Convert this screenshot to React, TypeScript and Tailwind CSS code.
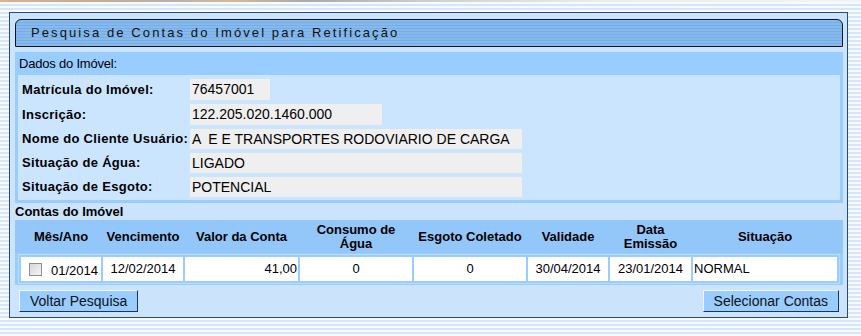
import React from 'react'

const font = "font-['Liberation_Sans',Arial,sans-serif]"

const fields = [
  { label: 'Matrícula do Imóvel:', value: '76457001', box: 'w-[80px] h-[21px]' },
  { label: 'Inscrição:', value: '122.205.020.1460.000', box: 'w-[192px] h-[21px]' },
  { label: 'Nome do Cliente Usuário:', value: 'A  E E TRANSPORTES RODOVIARIO DE CARGA', box: 'w-[332px] h-[20px]' },
  { label: 'Situação de Água:', value: 'LIGADO', box: 'w-[332px] h-[20px]' },
  { label: 'Situação de Esgoto:', value: 'POTENCIAL', box: 'w-[332px] h-[20px]' },
]

const cols = [
  { head: 'Mês/Ano', w: 'w-[80px]' },
  { head: 'Vencimento', w: 'w-[80px]' },
  { head: 'Valor da Conta', w: 'w-[113px]' },
  { head: 'Consumo de Água', w: 'w-[112px]', two: ['Consumo de', 'Água'] },
  { head: 'Esgoto Coletado', w: 'w-[112px]' },
  { head: 'Validade', w: 'w-[80px]' },
  { head: 'Data Emissão', w: 'w-[81px]', two: ['Data', 'Emissão'] },
  { head: 'Situação', w: 'flex-1' },
]

function Button({ children }: { children: React.ReactNode }) {
  return (
    <button className="h-[22px] border border-[#1d3557] border-t-[#eef6ff] border-l-[#eef6ff] bg-[#99ccff] px-[10px] text-[14px] leading-[18px] text-[#111]">
      {children}
    </button>
  )
}

export default function App() {
  return (
    <div
      className={`${font} h-[336px] w-[861px] overflow-hidden bg-[repeating-linear-gradient(to_bottom,#d4e6f7_0px,#d4e6f7_2px,#f7fbff_2px,#f7fbff_4px)] text-black`}
    >
      <div className="h-[2px] bg-[linear-gradient(to_right,#d6b595,#c9aa8c_10%,#b8b2ab_20%,#d9b98f_27%,#a9a9a9_35%,#cfcfcf_50%,#ececec_70%,#f4f4f4)]" />
      <div className="ml-[9px] mt-[10px] h-[306px] w-[839px] border border-[#2c4a6c] bg-[#cbe4fc] pl-[5px] pr-[4px] pt-[6px]">
        {/* title bar */}
        <div className="flex h-[28px] items-center rounded-t-[6px] border border-[#101820] bg-[repeating-linear-gradient(to_bottom,#86b9ee_0px,#86b9ee_2px,#78ade4_2px,#78ade4_3px)] pl-[15px]">
          <span className="text-[13px] tracking-[2.1px] text-[#111]">
            Pesquisa de Contas do Imóvel para Retificação
          </span>
        </div>

        {/* dados do imóvel */}
        <div className="mt-[5px]">
          <div className="flex h-[23px] items-center bg-[#99ccff] pl-[4px] text-[13px] tracking-[-0.2px]">
            Dados do Imóvel:
          </div>
          <div className="flex flex-col gap-[4px] border-x-[3px] border-b-[3px] border-[#99ccff] bg-[#cce5ff] pb-[3px] pt-[4px]">
            {fields.map((f) => (
              <div key={f.label} className="flex items-center">
                <div className="w-[172px] pl-[4px] text-[13px] font-bold tracking-[0.3px]">{f.label}</div>
                <div
                  className={`${f.box} overflow-hidden whitespace-pre bg-[#efefef] pl-[2px] text-[14px] leading-[20px]`}
                >
                  {f.value}
                </div>
              </div>
            ))}
          </div>
        </div>

        {/* contas */}
        <div className="h-[17px] text-[13px] font-bold leading-[17px]">Contas do Imóvel</div>
        <div className="flex h-[33px] items-center gap-[2px] bg-[#93c7fa] px-[6px] text-[13px] font-bold leading-[14px]">
          {cols.map((c) => (
            <div key={c.head} className={`${c.w} text-center`}>
              {c.two ? (
                <>
                  <div>{c.two[0]}</div>
                  <div>{c.two[1]}</div>
                </>
              ) : (
                c.head
              )}
            </div>
          ))}
        </div>
        <div className="bg-[#99ccff] px-[3px] py-[1px]">
          <div className="flex gap-[2px] border border-[#bcdcfb] p-[2px] text-[13px]">
            <div className="flex h-[24px] w-[80px] items-center bg-white pl-[8px]">
              <span className="h-[13px] w-[13px] border border-[#8d8d8d] bg-[linear-gradient(135deg,#d8d8d8,#f4f4f4)]" />
              <span className="ml-[9px] mt-[4px]">01/2014</span>
            </div>
            <div className="flex h-[24px] w-[80px] items-center justify-center bg-white">12/02/2014</div>
            <div className="flex h-[24px] w-[113px] items-center justify-end bg-white pr-[1px]">41,00</div>
            <div className="flex h-[24px] w-[112px] items-center justify-center bg-white">0</div>
            <div className="flex h-[24px] w-[112px] items-center justify-center bg-white">0</div>
            <div className="flex h-[24px] w-[80px] items-center justify-center bg-white">30/04/2014</div>
            <div className="flex h-[24px] w-[81px] items-center justify-center bg-white">23/01/2014</div>
            <div className="flex h-[24px] flex-1 items-center bg-white pl-[1px]">NORMAL</div>
          </div>
        </div>

        <div className="mt-[5px] flex justify-between px-[4px]">
          <Button>Voltar Pesquisa</Button>
          <Button>Selecionar Contas</Button>
        </div>
      </div>
    </div>
  )
}
